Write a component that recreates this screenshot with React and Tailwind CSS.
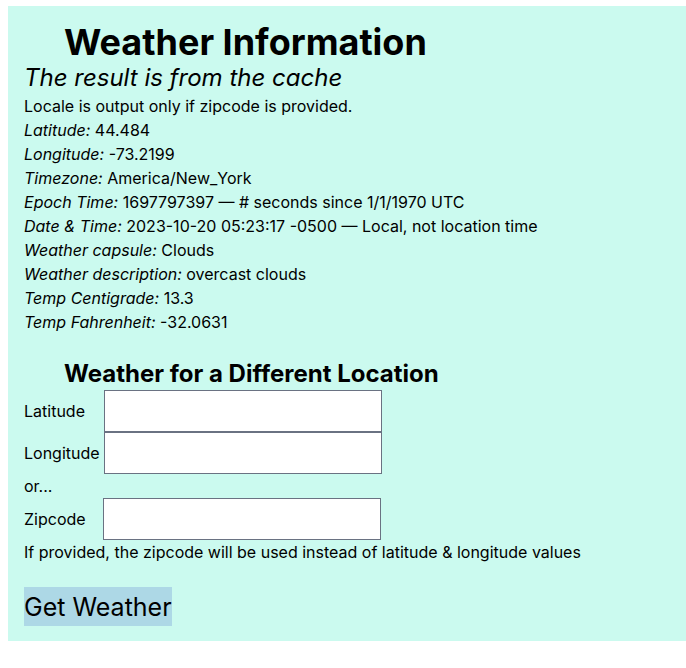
import React from 'react';

const rows = [
    ['Latitude', '44.484'],
    ['Longitude', '-73.2199'],
    ['Timezone', 'America/New_York'],
    ['Epoch Time', '1697797397 \u2014 # seconds since 1/1/1970 UTC'],
    ['Date & Time', '2023-10-20 05:23:17 -0500 \u2014 Local, not location time'],
    ['Weather capsule', 'Clouds'],
    ['Weather description', 'overcast clouds'],
    ['Temp Centigrade', '13.3'],
    ['Temp Fahrenheit', '-32.0631'],
];

const App = () => {
    return (
        <div className="min-h-screen bg-white pt-[6px] pl-2 text-black" style={{ fontFamily: 'Inter, "Noto Sans", sans-serif' }}>
            <div className="w-[678px] bg-[#cbfaef] px-4 pb-[15px] pt-4 text-base leading-6">
                {/* Header */}
                <h1 className="pl-10 text-[36px] font-bold leading-10">Weather Information</h1>
                <h2 className="text-2xl italic leading-8">The result is from the cache</h2>
                <p>Locale is output only if zipcode is provided.</p>
                {rows.map(([label, value]) => (
                    <div key={label}>
                        <em>{label}:</em> {value}
                    </div>
                ))}

                {/* Form */}
                <h3 className="mt-6 pl-10 text-2xl font-bold leading-8">Weather for a Different Location</h3>
                <div className="flex items-center">
                    <label className="w-20">Latitude</label>
                    <input className="h-[42px] w-[278px] border border-gray-500 bg-white" />
                </div>
                <div className="flex items-center">
                    <label className="w-20">Longitude</label>
                    <input className="h-[42px] w-[278px] border border-gray-500 bg-white" />
                </div>
                <div>or...</div>
                <div className="flex items-center">
                    <label className="w-[79px]">Zipcode</label>
                    <input className="h-[42px] w-[278px] border border-gray-500 bg-white" />
                </div>
                <p>If provided, the zipcode will be used instead of latitude &amp; longitude values</p>
                <button className="mt-[23px] h-[39px] bg-[#add8e6] px-0 text-[25px] leading-8">Get Weather</button>
            </div>
        </div>
    );
};

export default App;
